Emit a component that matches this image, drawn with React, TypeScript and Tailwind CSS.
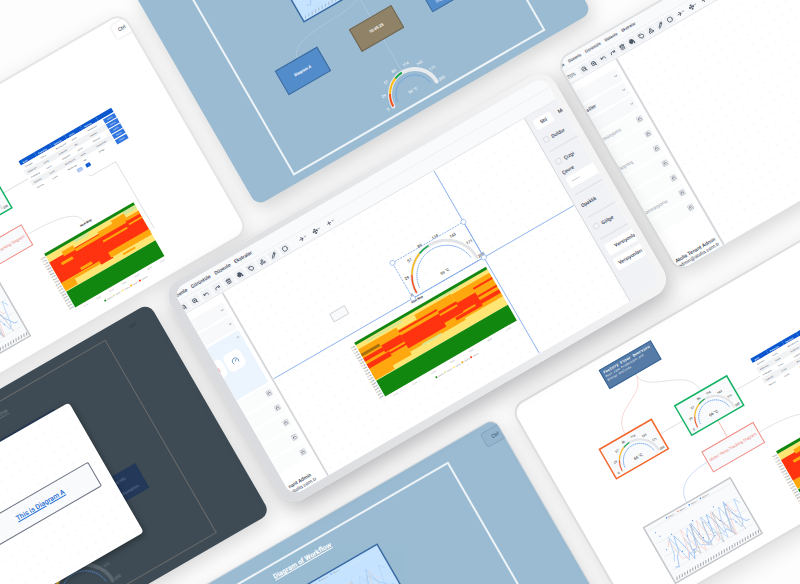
import React from 'react';
import {
  ArrowRight,
  ChevronDown,
  ChevronUp,
  Circle,
  Copy,
  Gauge as GaugeIcon,
  Lock,
  Move,
  PaintBucket,
  Pencil,
  Plus,
  Redo,
  Shapes,
  Tag,
  Trash2,
  Undo,
  ZoomIn,
  ZoomOut,
} from 'lucide-react';

type Cell = [number, number, number, number, string];

const GREEN = '#12870f';
const YELLOW = '#ffe573';
const ORANGE = '#ffa70f';
const RED = '#ff330f';
const LIME = '#d5e89a';

const wideCells: Cell[] = [
  [0, 3, 152, 41, YELLOW],
  [12, 4, 40, 2, LIME],
  [92, 3, 26, 2, LIME],
  [0, 8, 44, 31, ORANGE],
  [44, 11, 22, 25, ORANGE],
  [66, 6, 42, 30, ORANGE],
  [108, 7, 44, 27, ORANGE],
  [0, 36, 22, 7, ORANGE],
  [0, 13, 21, 3, '#a86f0c'],
  [0, 18, 22, 4, RED],
  [22, 16, 22, 8, RED],
  [0, 25, 26, 5, RED],
  [26, 26, 22, 2, RED],
  [44, 12, 44, 2, RED],
  [44, 17, 44, 15, RED],
  [88, 15, 21, 3, RED],
  [86, 20, 24, 8, RED],
  [108, 17, 22, 10, RED],
  [130, 12, 22, 2, RED],
  [130, 21, 22, 2, RED],
  [100, 29, 30, 3, RED],
  [124, 26, 28, 4, RED],
  [58, 35, 22, 2, LIME],
  [0, 44, 152, 18, GREEN],
  [0, 0, 152, 3, GREEN],
];

const smallCells: Cell[] = [
  [0, 3, 103, 41, YELLOW],
  [32, 3, 16, 3, LIME],
  [88, 3, 15, 4, LIME],
  [0, 10, 103, 24, RED],
  [0, 34, 14, 9, ORANGE],
  [14, 34, 40, 3, ORANGE],
  [16, 7, 13, 5, ORANGE],
  [29, 11, 28, 3, ORANGE],
  [10, 16, 13, 3, ORANGE],
  [24, 30, 13, 3, ORANGE],
  [44, 33, 14, 5, RED],
  [57, 8, 30, 6, ORANGE],
  [57, 18, 28, 2, ORANGE],
  [74, 5, 15, 7, ORANGE],
  [88, 10, 15, 3, ORANGE],
  [88, 16, 15, 2, ORANGE],
  [56, 31, 47, 6, ORANGE],
  [68, 39, 14, 2, ORANGE],
  [0, 44, 103, 18, GREEN],
  [0, 0, 103, 3, GREEN],
];

function HeatMap({ x, y, width, cells }: { x: number; y: number; width: number; cells: Cell[] }) {
  const legend = [GREEN, LIME, YELLOW, ORANGE, RED];
  return (
    <g transform={`translate(${x} ${y})`} fontFamily="Roboto, sans-serif">
      {cells.map(([cx, cy, w, h, fill], i) => (
        <rect key={i} x={cx} y={cy} width={w} height={h} fill={fill} />
      ))}
      {Array.from({ length: 20 }, (_, i) => (
        <text key={i} x={-1} y={4 + i * 3} fontSize={2} textAnchor="end" fill="#333">
          {`${10 + i}:00`}
        </text>
      ))}
      {Array.from({ length: 7 }, (_, i) => (
        <text key={i} x={8 + (i * width) / 7} y={66} fontSize={2} fill="#999">
          {`0${i + 1}.00`}
        </text>
      ))}
      {legend.map((fill, i) => (
        <g key={i}>
          <circle cx={width / 2 - 22 + i * 10} cy={71} r={1} fill={fill} />
          <text x={width / 2 - 20 + i * 10} y={72} fontSize={2} fill="#777">
            Level {i}
          </text>
        </g>
      ))}
      <text x={width / 2} y={-5} fontSize={3} fontWeight={700} textAnchor="middle" fill="#333">
        Heat Map
      </text>
    </g>
  );
}

// point on the upper half circle, t from 0 (left) to 1 (right)
function onArc(cx: number, cy: number, r: number, t: number) {
  const a = Math.PI * (1 - t);
  return [cx + r * Math.cos(a), cy - r * Math.sin(a)];
}

function arc(cx: number, cy: number, r: number, from: number, to: number) {
  const [x1, y1] = onArc(cx, cy, r, from);
  const [x2, y2] = onArc(cx, cy, r, to);
  return `M${x1} ${y1}A${r} ${r} 0 0 1 ${x2} ${y2}`;
}

interface GaugeProps {
  cx: number;
  cy: number;
  r: number;
  band: number;
  font: number;
  color?: string;
  track?: string;
}

function Gauge({ cx, cy, r, band, font, color = '#444', track = '#e3e4e8' }: GaugeProps) {
  const ticks = [0, 29, 57, 86, 114, 143, 171, 200];
  return (
    <g fill="none" fontFamily="Roboto, sans-serif">
      <path d={arc(cx, cy, r, 0, 1)} stroke={track} strokeWidth={band} strokeLinecap="round" />
      <path d={arc(cx, cy, r, 0, 0.17)} stroke="#f4511e" strokeWidth={band / 2} />
      <path d={arc(cx, cy, r, 0.17, 0.38)} stroke="#fbbc14" strokeWidth={band / 2} />
      <path d={arc(cx, cy, r, 0.38, 0.49)} stroke="#16a34a" strokeWidth={band / 2} />
      <path
        d={arc(cx, cy, r - band - 2, 0.03, 0.97)}
        stroke="#5b98ea"
        strokeWidth={0.8}
        strokeDasharray="1.4 0.6"
      />
      {ticks.map((tick, i) => {
        const [tx, ty] = onArc(cx, cy, r + band + 2, i / 7);
        return (
          <text key={tick} x={tx} y={ty + 1} fontSize={font} fontWeight={500} textAnchor="middle" fill={color}>
            {tick}
          </text>
        );
      })}
      <text x={cx} y={cy - 3} fontSize={4} fontWeight={500} textAnchor="middle" fill={color}>
        66 °C
      </text>
    </g>
  );
}

function series(w: number, h: number, seed: number, from: number, to: number) {
  const count = 26;
  const points: string[] = [];
  for (let i = 0; i < count; i++) {
    const px = (from + ((to - from) * i) / (count - 1)) * w;
    const wave = Math.sin(i * 1.1 + seed) * 0.2 + Math.sin(i * 2.3 + seed * 2.3) * 0.1;
    const rise = 0.08 * (0.5 - i / count);
    points.push(`${px.toFixed(1)},${((0.58 + wave + rise) * h).toFixed(1)}`);
  }
  return points.join(' ');
}

function LineChart({ x, y, w, h }: { x: number; y: number; w: number; h: number }) {
  return (
    <g transform={`translate(${x} ${y})`} fill="none" strokeWidth={0.6} fontFamily="Roboto, sans-serif">
      {[0.08, 0.32, 0.56, 0.8].map((t) => (
        <path key={t} d={`M4 ${h * t}H${w - 3}`} stroke="#e4e7ec" strokeWidth={0.5} />
      ))}
      <polyline points={series(w, h, 0.4, 0.08, 0.96)} stroke="#7fb0f0" />
      <polyline points={series(w, h, 2.6, 0.1, 0.96)} stroke="#a4c8f6" />
      <polyline points={series(w, h, 4.1, 0.12, 0.9)} stroke="#f9cbc5" />
      <polyline points={series(w, h, 5.4, 0.3, 0.88)} stroke="#b4bbc4" />
      {Array.from({ length: 16 }, (_, i) => (
        <circle key={i} cx={8 + ((i * 37) % (w - 14))} cy={h * 0.16 + ((i * 23) % (h * 0.55))} r={0.6} fill="#5a96ea" />
      ))}
      {Array.from({ length: 32 }, (_, i) => (
        <path key={i} d={`M${3 + (i * (w - 6)) / 31} ${h - 2}l1.5 -3`} stroke="#8a8f96" strokeWidth={0.7} />
      ))}
      {['#3b82f6', '#f28b82', '#3b82f6', '#3b82f6'].map((fill, i) => (
        <g key={i}>
          <circle cx={w * 0.25 + i * 13} cy={3} r={0.8} fill={fill} />
          <text x={w * 0.25 + 2 + i * 13} y={4} fontSize={2} fill="#666">
            Motor {i + 1}
          </text>
        </g>
      ))}
    </g>
  );
}

function Dots() {
  return (
    <div className="absolute inset-0 bg-[radial-gradient(circle,#e3e5e8_0.5px,transparent_1px)] bg-[length:10px_10px] opacity-40" />
  );
}

const tableRows = [
  ['Conveyor', 'Line A', 'Maintenance', 'Active', 'Temperature'],
  ['Robot Arm', 'Line B', 'Inspection', 'Idle', 'Vibration'],
  ['Packaging', 'Line C', 'Calibration', 'Active', 'Pressure'],
  ['Hydraulic', 'Line D', 'Maintenance', 'Active', 'Temperature'],
  ['Furnace', 'Line E', 'Monitoring', 'Idle', 'Energy'],
];

function TaskTable() {
  return (
    <div className="absolute left-[231px] top-[76px] w-[107px]">
      <table className="w-full table-fixed border-collapse text-[2px] leading-none text-gray-700">
        <thead>
          <tr className="h-[5px] bg-[#0b57d0] text-left text-white">
            {['Asset', 'Production', 'Operation', 'Status', 'Measure', ''].map((head) => (
              <th key={head} className="pl-[3px]">{head}</th>
            ))}
          </tr>
        </thead>
        <tbody>
          {tableRows.map((row) => (
            <tr key={row[0]} className="h-[6px] odd:bg-white even:bg-[#f1f2f4]">
              {row.map((cell, i) => (
                <td key={i} className="pl-[3px]">{cell}</td>
              ))}
              <td className="pl-[5px]">
                <button className="block h-[5px] w-[13px] bg-[#2f74e0] text-center text-white">Details</button>
              </td>
            </tr>
          ))}
        </tbody>
      </table>
      <div className="ml-[46px] mt-px flex gap-1 text-[2px] leading-none text-white">
        <button className="h-1 w-[6px] rounded-[1px] bg-[#a3c0f2]">Prev</button>
        <button className="h-1 w-[5px] rounded-[1px] bg-[#0b57d0]">1</button>
      </div>
    </div>
  );
}

function FactoryDiagram() {
  return (
    <div className="relative h-full w-[397px]">
      <svg className="absolute inset-0 h-[249px] w-[397px]" viewBox="0 0 397 249" fill="none">
        <path d="M124 32C124 56 85 50 85 78" stroke="#f6cdc8" strokeWidth={0.7} />
        <path d="M124 32C124 56 172 50 172 78" stroke="#d9dce0" strokeWidth={0.7} />
        <path d="M115 96H142M202 96H231M285 123L287 125H315V202" stroke="#d3d6da" strokeWidth={0.7} />
        <path d="M172 113V132" stroke="#f4a49c" strokeWidth={0.7} />
        <path d="M202 144C236 144 258 148 258 162" stroke="#d9dce0" strokeWidth={0.7} />
        <path d="M142 144C116 144 104 154 104 169" stroke="#bcd5f3" strokeWidth={0.7} />
        <rect x={55} y={79} width={60} height={34} fill="#f8fafc" stroke="#f4682e" strokeWidth={1.5} />
        <Gauge cx={85} cy={109} r={21} band={2} font={3} />
        <rect x={142} y={79} width={60} height={34} fill="#f8fafc" stroke="#16b364" strokeWidth={1.5} />
        <Gauge cx={172} cy={109} r={21} band={2} font={3} />
        <rect x={54} y={169} width={100} height={64} fill="#f8fafc" stroke="#c4c6c9" strokeWidth={1.5} />
        <LineChart x={54} y={169} w={100} h={64} />
        <HeatMap x={207} y={169} width={103} cells={smallCells} />
      </svg>
      <div className="absolute left-[94px] top-[10px] h-[22px] w-[60px] border border-[#3c6797] bg-[#557ba6] p-[2px] font-['Liberation_Mono',monospace] text-white">
        <p className="whitespace-nowrap text-[4px] font-bold leading-[5px]">Factory Floor Overview</p>
        <p className="text-[3px] leading-[4px]">Real time Production and Energy Analysis</p>
      </div>
      <div className="absolute left-[142px] top-[132px] flex h-6 w-[60px] items-center justify-center whitespace-nowrap border border-[#f28b82] bg-[#f8fafc] text-[4px] text-[#ee7b72]">
        Motor Temp Tracking Diagram
      </div>
      <TaskTable />
      <button className="absolute left-[378px] top-[5px] h-[15px] w-7 rounded-[3px] bg-white pl-[5px] text-left text-[5px] font-medium leading-none text-gray-600 shadow-[0_0_3px_rgba(0,0,0,0.15)]">
        Ctrl
      </button>
    </div>
  );
}

function WorkflowDiagram({ className, dark = false }: { className: string; dark?: boolean }) {
  return (
    <div className={`absolute h-[223px] ${dark ? 'border border-[#6b6b6b]' : 'border-2 border-[#eef4f8]'} ${className}`}>
      <h2 className={`absolute left-[103px] top-[6px] whitespace-nowrap text-[7px] font-bold leading-[10px] underline ${dark ? 'text-[#5f6a73]' : 'text-white'}`}>
        Diagram of Workflow
      </h2>
      <svg className="absolute left-0 top-0 h-[221px] w-[287px] overflow-visible" viewBox="0 0 287 221" fill="none">
        <path d="M144 93V186M144 98C130 112 60 96 60 123" stroke={dark ? '#51606c' : '#b3ccde'} strokeWidth={0.7} />
        <rect
          x={84}
          y={34}
          width={125}
          height={59}
          fill={dark ? '#56626c' : '#c5e3ff'}
          stroke={dark ? '#24395a' : '#3b6ba5'}
          strokeWidth={1.5}
        />
        {!dark && (
          <g opacity={0.6}>
            <LineChart x={84} y={34} w={125} h={59} />
          </g>
        )}
        <Gauge
          cx={144}
          cy={211}
          r={dark ? 31 : 25}
          band={4}
          font={4}
          color={dark ? '#76808a' : '#eef4f8'}
          track={dark ? '#5b666f' : '#e8ebee'}
        />
      </svg>
      <div className="absolute left-[34px] top-[121px] flex h-7 w-[49px] items-center justify-center border border-[#3f6c9d] bg-[#538ccb] text-[4px] font-bold text-white">
        Diagram A
      </div>
      <div className="absolute left-[119px] top-[122px] flex h-[26px] w-[49px] items-center justify-center border border-[#6f6757] bg-[#8f8266] text-[4px] font-bold text-white">
        10:45:25
      </div>
      <div
        className={`absolute left-[200px] top-[121px] flex h-7 w-[53px] flex-col justify-around border text-center text-[4px] leading-[5px] ${
          dark ? 'border-[#24395a] bg-[#24395a] text-[#7486a3]' : 'border-[#3f6c9d] bg-[#538ccb] text-white'
        }`}
      >
        <p>Related Info</p>
        <p>Diagram information</p>
      </div>
    </div>
  );
}

interface EditorProps {
  menuClass: string;
  toolClass: string;
  wideToolClass: string;
  zoomLabel?: string;
  sidebar: React.ReactNode;
  sidebarClass: string;
  children?: React.ReactNode;
}

const tools = [ZoomOut, ZoomIn, Undo, Redo, Trash2, PaintBucket, Tag, Shapes, Pencil, Circle];
const menuTools = [ArrowRight, Move, Plus];

function Editor({ menuClass, toolClass, wideToolClass, zoomLabel, sidebar, sidebarClass, children }: EditorProps) {
  return (
    <div className="flex h-full flex-col">
      <nav className={`flex h-[13px] shrink-0 border-b border-[#eef0f2] bg-[#f9fafc] font-medium leading-[10px] text-gray-700 ${menuClass}`}>
        {['Dosya', 'Düzenle', 'Görüntüle', 'Düzenle', 'Ekstralar'].map((item, i) => (
          <button key={i} className="shrink-0">{item}</button>
        ))}
      </nav>
      <div className="flex h-[14px] shrink-0 items-center border-b border-[#e3e5e8] bg-[#f9fafc] text-gray-600">
        {zoomLabel && <span className="w-[13px] shrink-0 text-[5px] leading-none">{zoomLabel}</span>}
        {tools.map((Icon, i) => (
          <button key={i} className={`flex shrink-0 justify-center ${toolClass}`}>
            <span className="rounded-[2px] bg-[#eff1f4] p-[2px]">
              <Icon size={6} strokeWidth={3} fill={Icon === PaintBucket ? 'currentColor' : 'none'} />
            </span>
          </button>
        ))}
        {menuTools.map((Icon, i) => (
          <button key={i} className={`flex shrink-0 items-center justify-center ${wideToolClass}`}>
            <Icon size={6} strokeWidth={3} />
            <ChevronDown size={3} strokeWidth={3} />
          </button>
        ))}
      </div>
      <div className="flex min-h-0 flex-1">
        <aside className={`flex shrink-0 flex-col overflow-hidden border-r-2 border-[#d5d7da] bg-white pt-2 ${sidebarClass}`}>
          {sidebar}
        </aside>
        {children}
      </div>
    </div>
  );
}

function SectionRow({ label }: { label?: string }) {
  return (
    <div className="mb-[2px] mr-1 flex h-[14px] shrink-0 items-center justify-between rounded-[2px] bg-[#f8f9fb] pr-[2px] text-[5px] font-medium text-gray-600">
      <span>{label}</span>
      <ChevronDown size={4} strokeWidth={2} />
    </div>
  );
}

function LockedRow({ label }: { label?: string }) {
  return (
    <div className="mb-[2px] mr-1 flex h-[15px] shrink-0 items-center justify-between bg-[#fbfcfc] pr-[2px] text-[5px] text-gray-400">
      <span>{label}</span>
      <span className="rounded-[1px] border border-gray-300 text-gray-500">
        <Lock size={4} strokeWidth={3} />
      </span>
    </div>
  );
}

function UserInfo({ name, mail }: { name: string; mail: string }) {
  return (
    <div className="mt-auto whitespace-nowrap pb-px pl-[2px] text-[5px] leading-[6px] text-gray-700">
      <p className="font-medium">{name}</p>
      <p>{mail}</p>
    </div>
  );
}

function CheckRow({ label }: { label: string }) {
  return (
    <label className="flex h-[14px] items-center gap-[3px]">
      <input type="checkbox" className="size-[6px] appearance-none rounded-[2px] border border-[#dcdee3] bg-[#f4f5f8]" />
      {label}
    </label>
  );
}

function StylePanel() {
  return (
    <aside className="w-[38px] shrink-0 overflow-hidden whitespace-nowrap border-l border-[#d5d7da] bg-[#f1f2f6] pl-[5px] text-[5px] font-medium leading-none text-gray-700">
      <div className="flex h-[22px] items-center gap-[7px]">
        <button className="h-[11px] w-5 shrink-0 rounded-[3px] bg-white">Stil</button>
        <button className="shrink-0">Metin</button>
      </div>
      <CheckRow label="Doldur" />
      <hr className="my-[5px] border-[#dfe1e6]" />
      <CheckRow label="Çizgi" />
      <label className="mt-[3px] block">
        Çevre
        <input className="mt-[3px] block h-3 w-12 rounded-[2px] bg-white px-1 text-[3px]" defaultValue="————" />
      </label>
      <hr className="mt-[7px] border-[#dfe1e6]" />
      <p className="py-[10px]">Opaklık</p>
      <hr className="mb-1 border-[#dfe1e6]" />
      <CheckRow label="Gölge" />
      <hr className="my-[6px] border-[#dfe1e6]" />
      <button className="block h-[13px] w-12 rounded-[2px] bg-white pl-[9px] text-left">Versiyonlar</button>
      <button className="mt-1 block h-[13px] w-12 rounded-[2px] bg-white pl-1 text-left">Versiyonları Sil</button>
    </aside>
  );
}

function MainCanvas() {
  const handles = [[161, 59], [243, 59], [161, 100], [243, 100]];
  return (
    <div className="relative min-w-0 flex-1 overflow-hidden bg-white">
      <Dots />
      <svg className="absolute left-0 top-0 h-[211px] w-[347px]" viewBox="0 0 347 211" fill="none">
        <rect x={81} y={72} width={17} height={9} fill="#f8fafc" stroke="#c2c5c9" strokeWidth={0.7} />
        <HeatMap x={88} y={109} width={152} cells={wideCells} />
        <Gauge cx={202} cy={97} r={35} band={3} font={4} />
        <path d="M243 0V211M0 100H347" stroke="#8fb3ee" strokeWidth={0.9} />
        <path d="M161 59H243V100H161Z" stroke="#6f9de6" strokeWidth={0.7} strokeDasharray="2 1" />
        {handles.map(([x, y]) => (
          <circle key={`${x}-${y}`} cx={x} cy={y} r={2.5} fill="#fff" stroke="#8fb3ee" strokeWidth={0.7} />
        ))}
      </svg>
    </div>
  );
}

const App: React.FC = () => {
  return (
    <main className="relative h-screen w-full overflow-hidden bg-[#fdfdfd] font-['Roboto',sans-serif]">
      <div className="absolute left-1/2 top-1/2 h-[1000px] w-[1200px] -translate-x-1/2 -translate-y-1/2 -rotate-30">
        <section className="absolute left-[102px] top-[118px] h-[254px] w-[398px] overflow-hidden rounded-[14px] border-2 border-[#e4e6e6] bg-white shadow-[0_6px_20px_rgba(0,0,0,0.12)]">
          <FactoryDiagram />
        </section>

        <section className="absolute left-[519px] top-[107px] h-[247px] w-[387px] overflow-hidden rounded-[10px] bg-[#9abbd2] shadow-[0_8px_20px_rgba(0,0,0,0.17)]">
          <WorkflowDiagram className="left-[47px] top-[16px] w-[291px]" />
        </section>

        <section className="absolute left-[-10px] top-[384px] h-[243px] w-[387px] overflow-hidden rounded-[10px] bg-[#3e4b54] shadow-[0_6px_20px_rgba(0,0,0,0.16)]">
          <WorkflowDiagram dark className="left-[41px] top-[10px] w-[290px]" />
          <p className="absolute left-[358px] top-[8px] text-[5px] text-[#29343c]">Ctrl</p>
          <div className="absolute left-[116px] top-[46px] flex h-[150px] w-[152px] items-center justify-center rounded-[4px] bg-white shadow-[0_2px_6px_rgba(0,0,0,0.4)]">
            <Dots />
            <div className="relative flex h-7 w-[126px] items-center justify-center rounded-[2px] border border-[#6b7280] bg-[#f8fafc]">
              <a href="#diagram-a" className="text-[7px] font-medium text-[#1a67d2] underline">
                This is Diagram A
              </a>
            </div>
          </div>
        </section>

        <section className="absolute left-[850px] top-[377px] h-[246px] w-[430px] overflow-hidden rounded-[14px] border-2 border-[#dfe1e2] bg-white shadow-[0_6px_20px_rgba(0,0,0,0.15)]">
          <Editor
            menuClass="gap-[5px] -ml-[7px] text-[4px]"
            toolClass="w-[11px]"
            wideToolClass="w-[14px]"
            zoomLabel="70%"
            sidebarClass="w-[53px]"
            sidebar={
              <>
                <SectionRow />
                <SectionRow label="siller" />
                <SectionRow />
                <LockedRow label="masyonu" />
                <LockedRow />
                <LockedRow label="leşmiş" />
                <LockedRow />
                <LockedRow />
                <LockedRow label="ormasyonu" />
                <LockedRow />
                <UserInfo name="Atolia Tenant Admin" mail="admin@atolia.com.tr" />
              </>
            }
          >
            <div className="relative flex-1">
              <Dots />
            </div>
          </Editor>
        </section>

        <section className="absolute left-[232px] top-[656px] h-[247px] w-[387px] overflow-hidden rounded-[10px] border border-[#d5dade] bg-[#9abbd2] shadow-[0_4px_16px_rgba(0,0,0,0.14)]">
          <WorkflowDiagram className="left-[10px] top-[14px] w-[314px]" />
          <button className="absolute left-[365px] top-[6px] h-4 w-8 rounded-[3px] border border-[#84a5bd] bg-[#93b4cc] pl-2 text-left text-[5px] font-medium leading-none text-[#3a5d7a]">
            Ctrl
          </button>
        </section>

        <section className="absolute left-[637px] top-[655px] h-[248px] w-[401px] overflow-hidden rounded-[14px] border-2 border-[#dcdedf] bg-white shadow-[0_6px_24px_rgba(0,0,0,0.14)]">
          <FactoryDiagram />
        </section>

        <section className="absolute left-[395px] top-[379px] h-[252px] w-[444px] rounded-[18px] bg-linear-to-r from-[#d9dbde] via-[#e6e7e9] to-[#f4f4f5] pb-2 pl-[9px] pr-[7px] pt-[6px] shadow-[0_8px_22px_rgba(30,30,40,0.32)]">
          <div className="h-full overflow-hidden rounded-[12px] bg-white">
            <Editor
              menuClass="gap-[5px] -ml-[24px] text-[5px]"
              toolClass="w-[13px] -ml-[6px] mr-[6px]"
              wideToolClass="w-4"
              sidebarClass="w-[43px]"
              sidebar={
                <>
                  <SectionRow />
                  <SectionRow />
                  <div className="mb-[2px] mr-1 h-[60px] shrink-0 rounded-[2px] bg-[#ecf5fe] pr-[2px] pt-1">
                    <ChevronUp size={4} className="ml-auto text-gray-500" />
                    <div className="-ml-3 mt-[7px] flex gap-[2px]">
                      <button className="flex size-[19px] shrink-0 items-center justify-center rounded-[5px] bg-white text-red-500">
                        <Copy size={7} />
                      </button>
                      <button className="flex size-[19px] shrink-0 items-center justify-center rounded-[5px] bg-white text-[#4a7fae]">
                        <GaugeIcon size={8} />
                      </button>
                    </div>
                  </div>
                  <LockedRow />
                  <LockedRow />
                  <LockedRow />
                  <LockedRow />
                  <LockedRow />
                  <UserInfo name="nant Admin" mail="atolia.com.tr" />
                </>
              }
            >
              <MainCanvas />
              <StylePanel />
            </Editor>
          </div>
        </section>
      </div>
    </main>
  );
};

export default App;
